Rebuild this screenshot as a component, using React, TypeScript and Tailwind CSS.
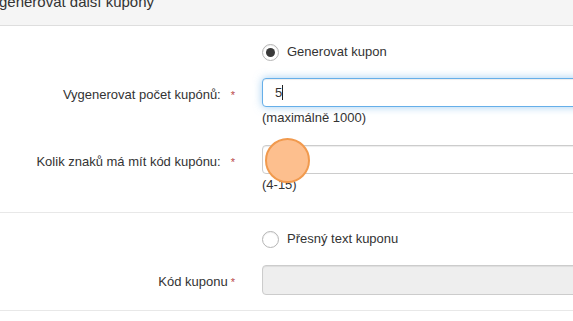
import React from "react";

function Radio({ checked, label }: { checked?: boolean; label: string }) {
  return (
    <div className="flex items-center h-[18px] gap-[8px] pl-[262px]">
      <span className="flex items-center justify-center w-[17px] h-[17px] rounded-full border border-[#b5b5b5] bg-white shadow-[inset_0_1px_1px_rgba(0,0,0,0.06)]">
        {checked && <span className="w-[9px] h-[9px] rounded-full bg-[#3a3a3a]" />}
      </span>
      <span className="leading-[18px]">{label}</span>
    </div>
  );
}

function Row({
  label,
  gap = "ml-[10px]",
  children,
}: {
  label: string;
  gap?: string;
  children: React.ReactNode;
}) {
  return (
    <div className="flex items-start">
      <div className="w-[247px] shrink-0 pr-[12px] pt-[8px] text-right leading-[18px]">
        {label}
        <span className={`${gap} text-[11px] text-[#b94a48]`}>*</span>
      </div>
      <div className="pl-[15px] shrink-0 w-[420px]">{children}</div>
    </div>
  );
}

export default function App() {
  return (
    <div
      className="w-full h-[321px] overflow-hidden bg-white text-[13px] text-[#333]"
      style={{ fontFamily: '"Liberation Sans", Arial, sans-serif' }}
    >
      {/* modal header */}
      <div className="h-[26px] bg-[#f5f5f5] border-b border-[#dedede] overflow-hidden">
        <div className="mt-[-6px] ml-[-18px] text-[15px] leading-[15px] whitespace-nowrap">
          Vygenerovat další kupony
        </div>
      </div>

      {/* generated coupons */}
      <div className="pt-[17px] pb-[18px] border-b border-[#e8e8e8]">
        <Radio checked label="Generovat kupon" />
        <div className="mt-[17px]">
          <Row label="Vygenerovat počet kupónů:">
            <div className="flex items-center h-[29px] rounded-[4px] border border-[#66afe9] px-[12px] bg-white shadow-[inset_0_1px_1px_rgba(0,0,0,0.075),0_0_8px_rgba(102,175,233,0.6)]">
              5<span className="w-px h-[15px] bg-[#222]" />
            </div>
            <div className="mt-[2px] leading-[18px]">(maximálně 1000)</div>
          </Row>
        </div>
        <div className="mt-[18px]">
          <Row label="Kolik znaků má mít kód kupónu:">
            <div className="relative">
              <div className="h-[29px] rounded-[4px] border border-[#ccc] bg-white shadow-[inset_0_1px_1px_rgba(0,0,0,0.075)]" />
              <div className="mt-[2px] leading-[18px]">(4-15)</div>
              {/* click indicator */}
              <span className="absolute left-[3px] top-[-7px] w-[45px] h-[45px] rounded-full bg-[#fdbf8e] border-2 border-[#f19a4e]" />
            </div>
          </Row>
        </div>
      </div>

      {/* exact text */}
      <div className="pt-[17px] pb-[15px] border-b border-[#e8e8e8]">
        <Radio label="Přesný text kuponu" />
        <div className="mt-[17px]">
          <Row label="Kód kuponu" gap="ml-[3px]">
            <div className="h-[30px] rounded-[4px] border border-[#ccc] bg-[#eee] shadow-[inset_0_1px_1px_rgba(0,0,0,0.075)]" />
          </Row>
        </div>
      </div>
    </div>
  );
}
